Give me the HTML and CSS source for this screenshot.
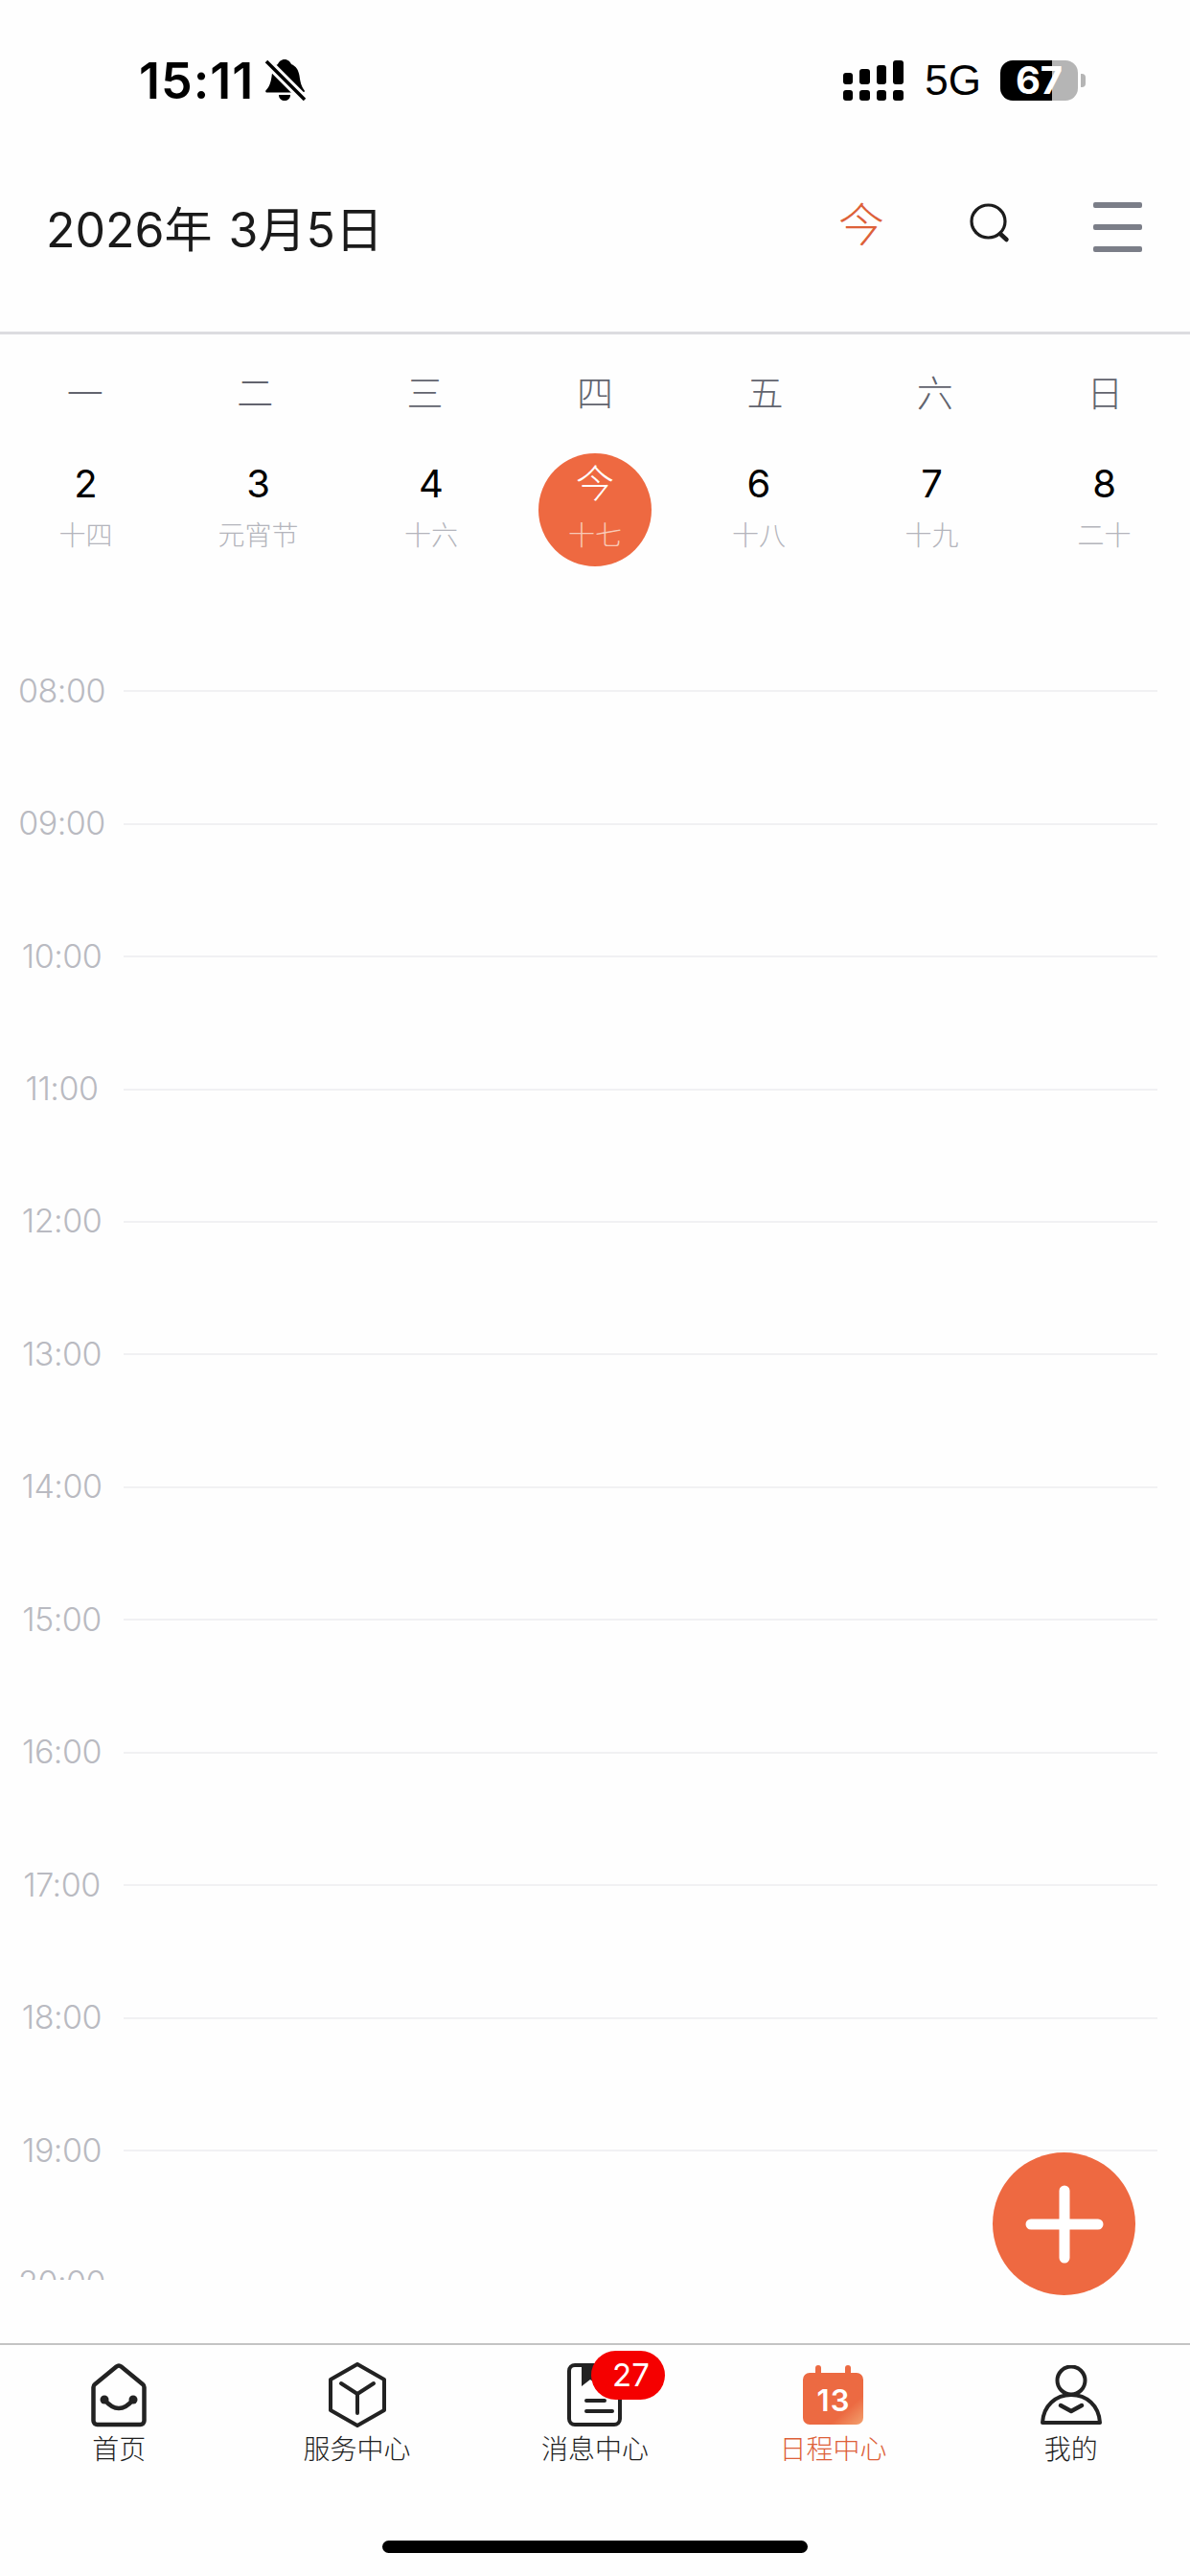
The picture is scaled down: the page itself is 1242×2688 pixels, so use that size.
FILE: index.html
```html
<!DOCTYPE html>
<html lang="zh-CN">
<head>
    <meta charset="UTF-8">
    <meta name="viewport" content="width=device-width, initial-scale=1.0">
    <title>日程中心</title>
    <link rel="stylesheet" href="styles.css">
</head>
<body>
    <div class="page">
        <div class="status-bar">
            <div class="status-left">
                <span class="clock">15:11</span>
                <svg class="bell" width="42" height="44" viewBox="0 0 42 44">
                    <path d="M20 0c3.500 0 6 2.500 7 5 5 2 7.500 6 8.500 12 1 7 2 11 5 15 .8 1 .5 2.500-1.500 2.500H2C0 34.500-.3 33 .8 32 4.500 28 5.500 24 6.500 18 7.500 11 9 7 13 5c1-2.500 3.500-5 7-5z" fill="#000"/>
                    <path d="M14 37h12c0 4-3 6-6 6s-6-2-6-6z" fill="#000"/>
                    <path d="M1 2 41 42" stroke="#fefefe" stroke-width="9.500"/>
                    <path d="M1 2 41 42" stroke="#000" stroke-width="3.500"/>
                </svg>
            </div>
            <div class="status-right">
                <svg class="signal" width="63" height="42" viewBox="0 0 63 42" fill="#000">
                    <rect x="0" y="13" width="10" height="12" rx="3"/>
                    <rect x="17" y="9" width="11" height="16" rx="3"/>
                    <rect x="35" y="5" width="10" height="20" rx="3"/>
                    <rect x="52" y="0" width="11" height="25" rx="3"/>
                    <rect x="0" y="31" width="10" height="11" rx="3"/>
                    <rect x="17" y="31" width="11" height="11" rx="3"/>
                    <rect x="35" y="31" width="10" height="11" rx="3"/>
                    <rect x="52" y="31" width="11" height="11" rx="3"/>
                </svg>
                <span class="network">5G</span>
                <div class="battery">67</div>
                <div class="battery-cap"></div>
            </div>
        </div>

        <div class="top-bar">
            <div class="top-title">2026年 3月5日</div>
            <div class="top-actions">
                <span class="today-link">今</span>
                <svg class="search-icon" width="44" height="42" viewBox="0 0 44 42" fill="none" stroke="#1c1c1c">
                    <ellipse cx="20.500" cy="19" rx="17.500" ry="17" stroke-width="3.200"/>
                    <path d="M33 32 39.500 38" stroke-width="4.500" stroke-linecap="round"/>
                </svg>
                <div class="menu-icon"><i></i><i></i><i></i></div>
            </div>
        </div>

        <div class="week-row">
            <span>一</span><span>二</span><span>三</span><span>四</span><span>五</span><span>六</span><span>日</span>
        </div>

        <div class="date-row">
            <div class="date-cell"><span class="date-num">2</span><span class="date-lunar">十四</span></div>
            <div class="date-cell"><span class="date-num">3</span><span class="date-lunar">元宵节</span></div>
            <div class="date-cell"><span class="date-num">4</span><span class="date-lunar">十六</span></div>
            <div class="date-cell active"><span class="date-num">今</span><span class="date-lunar">十七</span></div>
            <div class="date-cell"><span class="date-num">6</span><span class="date-lunar">十八</span></div>
            <div class="date-cell"><span class="date-num">7</span><span class="date-lunar">十九</span></div>
            <div class="date-cell"><span class="date-num">8</span><span class="date-lunar">二十</span></div>
        </div>

        <div class="schedule">
            <div class="hour"><span>08:00</span><i></i></div>
            <div class="hour"><span>09:00</span><i></i></div>
            <div class="hour"><span>10:00</span><i></i></div>
            <div class="hour"><span>11:00</span><i></i></div>
            <div class="hour"><span>12:00</span><i></i></div>
            <div class="hour"><span>13:00</span><i></i></div>
            <div class="hour"><span>14:00</span><i></i></div>
            <div class="hour"><span>15:00</span><i></i></div>
            <div class="hour"><span>16:00</span><i></i></div>
            <div class="hour"><span>17:00</span><i></i></div>
            <div class="hour"><span>18:00</span><i></i></div>
            <div class="hour"><span>19:00</span><i></i></div>
            <div class="hour"><span>20:00</span><i></i></div>
        </div>

        <div class="tab-bar">
            <div class="tab">
                <div class="tab-icon">
                    <svg width="58" height="67" viewBox="0 0 58 67" fill="none" stroke="#222" stroke-width="4.500">
                        <path d="M26.500 3.500a4 4 0 0 1 5 0L54 22a4 4 0 0 1 1.500 3v35a4 4 0 0 1-4 4H6.500a4 4 0 0 1-4-4V25A4 4 0 0 1 4 22z"/>
                        <path d="M14 38Q29 56 44 38"/>
                        <circle cx="14" cy="38" r="4.500" fill="#222" stroke="none"/>
                        <circle cx="44" cy="38" r="4.500" fill="#222" stroke="none"/>
                    </svg>
                </div>
                <span class="tab-label">首页</span>
            </div>
            <div class="tab">
                <div class="tab-icon">
                    <svg width="60" height="68" viewBox="0 0 60 68" fill="none" stroke="#222" stroke-width="4" stroke-linejoin="round" stroke-linecap="round">
                        <path d="M30 2 58 18V50L30 66 2 50V18z"/>
                        <path d="M13 22 30 33 47 22M30 33V53"/>
                    </svg>
                </div>
                <span class="tab-label">服务中心</span>
            </div>
            <div class="tab">
                <div class="tab-icon message-icon">
                    <svg width="57" height="66" viewBox="0 0 57 66" fill="none" stroke="#222" stroke-width="4">
                        <rect x="2" y="2" width="53" height="62" rx="6"/>
                        <path d="M15 2V24L24 17 33 24V2z" fill="#222" stroke="none"/>
                        <path d="M20 39H39M20 50H47" stroke-linecap="round"/>
                    </svg>
                    <span class="badge">27</span>
                </div>
                <span class="tab-label">消息中心</span>
            </div>
            <div class="tab current">
                <div class="tab-icon">
                    <svg width="63" height="62" viewBox="0 0 63 62">
                        <defs>
                            <linearGradient id="calFill" x1="0" y1="0" x2="1" y2="1">
                                <stop offset="0.72" stop-color="#ec6a42"/>
                                <stop offset="1" stop-color="#f3a26f"/>
                            </linearGradient>
                        </defs>
                        <rect x="0" y="8" width="63" height="54" rx="7" fill="url(#calFill)"/>
                        <rect x="13" y="0" width="6" height="14" rx="3" fill="#ec6a42"/>
                        <rect x="44" y="0" width="6" height="14" rx="3" fill="#ec6a42"/>
                        <text x="32" y="48" text-anchor="middle" class="cal-num">13</text>
                    </svg>
                </div>
                <span class="tab-label">日程中心</span>
            </div>
            <div class="tab">
                <div class="tab-icon">
                    <svg width="64" height="62" viewBox="0 0 64 62" fill="none" stroke="#222" stroke-width="4">
                        <circle cx="32" cy="16" r="14.500"/>
                        <path d="M2 60C3 42 16 31 32 31S61 42 62 60z" stroke-linejoin="round"/>
                        <path d="M21 42 32 48 43 42" stroke-width="4.500" stroke-linecap="round" stroke-linejoin="round"/>
                    </svg>
                </div>
                <span class="tab-label">我的</span>
            </div>
        </div>

        <div class="home-bar"></div>

        <div class="add-button">
            <svg width="82" height="82" viewBox="0 0 82 82" stroke="#fff" stroke-width="11" stroke-linecap="round">
                <path d="M6 41H76M41 6V76"/>
            </svg>
        </div>
    </div>
</body>
</html>
```

FILE: styles.css
```css
* {
    box-sizing: border-box;
}
html, body {
    margin: 0;
    padding: 0;
}
body {
    font-family: "Inter", "Noto Sans CJK SC", sans-serif;
    background-color: #fefefe;
}
.page {
    position: relative;
    width: 1242px;
    height: 2688px;
    display: flex;
    flex-direction: column;
    overflow: hidden;
    background-color: #fefefe;
}

/* status bar */
.status-bar {
    height: 130px;
    padding: 38px 109px 0 145px;
    display: flex;
    justify-content: space-between;
    align-items: center;
    color: #000;
}
.status-left, .status-right {
    display: flex;
    align-items: center;
}
.clock {
    font-size: 52px;
    font-weight: 600;
    letter-spacing: 1px;
}
.bell {
    margin-left: 12px;
}
.network {
    margin-left: 22px;
    font-family: "Liberation Sans", sans-serif;
    font-size: 44px;
}
.battery {
    width: 81px;
    height: 42px;
    margin-left: 20px;
    border-radius: 13px;
    background: linear-gradient(to right, #000 54px, #b5b5b5 54px);
    color: #fff;
    font-size: 40px;
    font-weight: 700;
    line-height: 42px;
    text-align: center;
}
.battery-cap {
    width: 5px;
    height: 14px;
    margin-left: 3px;
    border-radius: 0 4px 4px 0;
    background-color: #b5b5b5;
}

/* header */
.top-bar {
    height: 219px;
    padding: 0 50px 3px 48px;
    display: flex;
    justify-content: space-between;
    align-items: center;
    border-bottom: 3px solid #dcdce0;
}
.top-title {
    margin-bottom: 2px;
    font-size: 50px;
    word-spacing: 3px;
    color: #1a1a1a;
}
.top-actions {
    display: flex;
    align-items: center;
}
.today-link {
    width: 48px;
    margin-bottom: 3px;
    font-size: 48px;
    font-weight: 300;
    line-height: 60px;
    color: #dd6139;
}
.search-icon {
    margin-left: 88px;
    margin-bottom: 8px;
}
.menu-icon {
    width: 51px;
    height: 52px;
    margin-left: 86px;
    display: flex;
    flex-direction: column;
    justify-content: space-between;
}
.menu-icon i {
    display: block;
    height: 6px;
    border-radius: 2px;
    background-color: #7b7e88;
}

/* week */
.week-row {
    height: 116px;
    display: grid;
    grid-template-columns: repeat(7, 1fr);
    align-items: center;
    text-align: center;
    font-size: 38px;
    font-weight: 300;
    color: #62646e;
}
.date-row {
    height: 118px;
    margin-top: 8px;
    display: grid;
    grid-template-columns: 179px 181px 180px 162px 180px 181px 179px;
}
.date-cell {
    display: flex;
    flex-direction: column;
    align-items: center;
    padding-top: 7px;
}
.date-num {
    font-size: 40px;
    line-height: 50px;
    color: #000;
}
.date-lunar {
    margin-top: 9px;
    font-size: 28px;
    font-weight: 300;
    line-height: 40px;
    color: #b4b5bc;
}
.date-cell.active {
    width: 118px;
    justify-self: center;
    border-radius: 50%;
    background-color: #ee6941;
}
.date-cell.active .date-num {
    font-size: 40px;
    font-weight: 300;
    color: #fff;
}
.date-cell.active .date-lunar {
    color: #f8c9b6;
}

/* hours */
.schedule {
    flex: 1;
    margin-top: 61px;
    margin-bottom: 66px;
    overflow: hidden;
}
.hour {
    height: 138.45px;
    display: flex;
    align-items: center;
}
.hour span {
    width: 129px;
    flex-shrink: 0;
    padding-bottom: 2px;
    text-align: center;
    font-size: 34px;
    font-weight: 300;
    letter-spacing: -.5px;
    color: #b9bac1;
}
.hour i {
    flex: 1;
    height: 2px;
    margin-right: 34px;
    background-color: #f1f1f3;
}

/* bottom tabs */
.tab-bar {
    height: 243px;
    padding-top: 19px;
    display: grid;
    grid-template-columns: repeat(5, 1fr);
    align-items: start;
    border-top: 2px solid #c4c4c4;
}
.tab {
    display: flex;
    flex-direction: column;
    align-items: center;
}
.tab-icon {
    position: relative;
    height: 66px;
    display: flex;
    align-items: center;
    justify-content: center;
}
.tab-label {
    margin-top: 4px;
    font-size: 28px;
    line-height: 40px;
    font-weight: 300;
    color: #1e1e1e;
}
.tab.current .tab-label {
    color: #dd6139;
}
.cal-num {
    font-family: "Inter", sans-serif;
    font-size: 31px;
    font-weight: 600;
    letter-spacing: 1px;
    fill: #fff;
}
.badge {
    position: absolute;
    left: 25px;
    top: -13px;
    width: 77px;
    height: 51px;
    padding-left: 5px;
    border-radius: 26px;
    background-color: #f50000;
    color: #fff;
    font-size: 33px;
    line-height: 51px;
    text-align: center;
}
.home-bar {
    position: absolute;
    left: 399px;
    top: 2651px;
    width: 444px;
    height: 13px;
    border-radius: 7px;
    background-color: #000;
}
.add-button {
    position: absolute;
    left: 1036px;
    top: 2246px;
    width: 149px;
    height: 149px;
    border-radius: 50%;
    background-color: #ee6941;
    display: flex;
    align-items: center;
    justify-content: center;
}
```
